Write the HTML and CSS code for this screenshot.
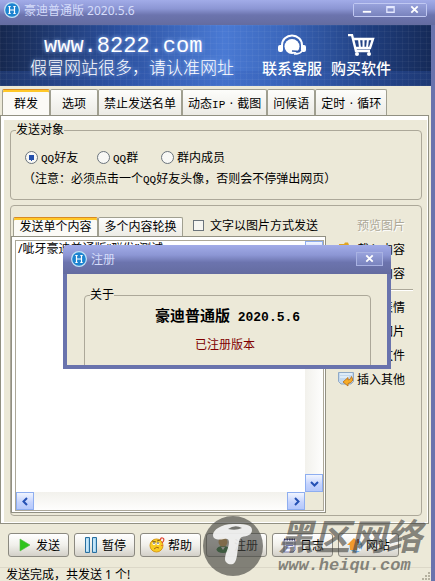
FILE: index.html
```html
<!DOCTYPE html>
<html lang="zh-CN">
<head>
  <meta charset="UTF-8">
  <meta name="viewport" content="width=device-width, initial-scale=1.0">
  <title>豪迪普通版 2020.5.6</title>
  <link rel="stylesheet" href="styles.css">
</head>
<body>
  <div class="window">

    <header class="titlebar">
      <svg class="logo" viewBox="0 0 16 16">
        <circle cx="8" cy="8" r="7.4" fill="#1c84d0" stroke="#c4e2f6" stroke-width="1.2"/>
        <path d="M5.5 4.5v7M10.5 4.5v7M5.5 8h5M4.3 4.5h2.4M9.3 4.5h2.4M4.3 11.5h2.4M9.3 11.5h2.4" stroke="#fff" stroke-width="1.2" fill="none"/>
      </svg>
      <h1>豪迪普通版 2020.5.6</h1>
      <div class="window-buttons">
        <button aria-label="最小化"><svg viewBox="0 0 12 12"><path d="M2 8.500h9" stroke="#fff" stroke-width="2"/></svg></button>
        <button aria-label="最大化"><svg viewBox="0 0 12 12"><path d="M2 3h8v6H2zM2 4h8" stroke="#e4e8ff" stroke-width="1.400" fill="none"/></svg></button>
        <button aria-label="关闭"><svg viewBox="0 0 12 12"><path d="M2.500 2.500l7 7M9.500 2.500l-7 7" stroke="#fff" stroke-width="2"/></svg></button>
      </div>
    </header>

    <div class="client">
      <div class="banner">
        <div class="slogan">
          <p class="site">www.8222.com</p>
          <p class="warning">假冒网站很多，请认准网址</p>
        </div>
        <a class="banner-link" href="#">
          <svg width="28" height="22" viewBox="0 0 28 22">
            <path d="M4 13V11a10 9.500 0 0 1 20 0v2" stroke="#fff" stroke-width="2" fill="none"/>
            <circle cx="14" cy="12.500" r="7.500" fill="#fff"/>
            <rect x="0" y="11" width="5" height="7" rx="2" fill="#fff"/>
            <rect x="23" y="11" width="5" height="7" rx="2" fill="#fff"/>
            <path d="M24 17q-2 3-8 3" stroke="#fff" stroke-width="1.500" fill="none"/>
            <path d="M14 17l8 .5" stroke="#345ba8" stroke-width="1.500"/>
          </svg>
          联系客服
        </a>
        <a class="banner-link" href="#">
          <svg width="28" height="22" viewBox="0 0 28 22">
            <path d="M1 1h4l4 16h14M7 5h19l-3 9H9" stroke="#fff" stroke-width="2.400" fill="none"/>
            <path d="M12 5l1 9M16.500 5v9M21 5l-1 9" stroke="#fff" stroke-width="2"/>
            <circle cx="10" cy="20" r="2" fill="#fff"/>
            <circle cx="22" cy="20" r="2" fill="#fff"/>
          </svg>
          购买软件
        </a>
      </div>

      <nav class="tabs">
        <button class="tab active">群发</button>
        <button class="tab">选项</button>
        <button class="tab">禁止发送名单</button>
        <button class="tab">动态<span class="half">IP</span><span class="dot">·</span>截图</button>
        <button class="tab">问候语</button>
        <button class="tab">定时<span class="dot">·</span>循环</button>
      </nav>

      <main class="panel">
        <fieldset class="group target">
          <legend>发送对象</legend>
          <div class="radios">
            <label><input type="radio" name="target" checked><span><span class="half">QQ</span>好友</span></label>
            <label><input type="radio" name="target"><span><span class="half">QQ</span>群</span></label>
            <label><input type="radio" name="target"><span>群内成员</span></label>
          </div>
          <p class="note">（注意：必须点击一个<span class="half">QQ</span>好友头像，否则会不停弹出网页）</p>
        </fieldset>

        <section class="group content">
          <div class="editor">
            <div class="editor-head">
              <div class="small-tabs">
                <button class="tab active">发送单个内容</button>
                <button class="tab">多个内容轮换</button>
              </div>
              <label class="as-image"><input type="checkbox">文字以图片方式发送</label>
            </div>
            <div class="editor-frame">
              <div class="editor-box">
                <textarea aria-label="发送内容" spellcheck="false">/呲牙豪迪普通版“群发”测试</textarea>
                <div class="scroll-v">
                  <button aria-label="向上"><svg viewBox="0 0 9 9"><path d="M1 6l3.500-3.500L8 6"/></svg></button>
                  <button aria-label="向下"><svg viewBox="0 0 9 9"><path d="M1 3l3.500 3.500L8 3"/></svg></button>
                </div>
                <div class="scroll-h">
                  <button aria-label="向左"><svg viewBox="0 0 9 9"><path d="M6 1L2.500 4.500 6 8"/></svg></button>
                  <button aria-label="向右"><svg viewBox="0 0 9 9"><path d="M3 1l3.500 3.500L3 8"/></svg></button>
                </div>
              </div>
            </div>
          </div>

          <div class="actions">
            <button class="action" disabled><i class="icon"></i>预览图片</button>
            <button class="action"><svg class="icon" viewBox="0 0 16 16"><path d="M1 3h5l1-1.500h3L11 4h4v10H1z" fill="#e0a422"/></svg>载入内容</button>
            <button class="action"><i class="icon"></i>清空内容</button>
            <hr>
            <button class="action"><i class="icon"></i>插入表情</button>
            <button class="action"><i class="icon"></i>插入图片</button>
            <button class="action"><i class="icon"></i>插入文件</button>
            <button class="action">
              <svg class="icon" viewBox="0 0 16 16">
                <path d="M.5 1.500h15v9L13 13H3L.5 10.500z" fill="#c3d8ee" stroke="#8fa9c6"/>
                <path d="M2 3h12M2 6h9" stroke="#e8f2fc" stroke-width="1.500"/>
                <path d="M5 11l5-4.500V9q3 0 3.500-3.500Q17 11 10 12.500V15z" fill="#f7ad28" stroke="#b86b10" stroke-width=".8"/>
              </svg>插入其他</button>
          </div>
        </section>
      </main>

      <div class="toolbar">
        <button class="tool">
          <svg class="icon" viewBox="0 0 16 16"><path d="M3 2l10 6-10 6z" fill="#2fc41c" stroke="#55b848" stroke-width=".6"/></svg>发送
        </button>
        <button class="tool">
          <svg class="icon" viewBox="0 0 16 16"><path d="M2.500.5h4v15h-4zM9.500.5h4v15h-4z" fill="#a5d5f1" stroke="#286f9f"/><path d="M4 2v12M11 2v12" stroke="#e7f7ff"/></svg>暂停
        </button>
        <button class="tool">
          <svg class="icon" viewBox="0 0 16 16">
            <circle cx="7.500" cy="8.500" r="6.500" fill="#f8cc22" stroke="#d99b19"/>
            <path d="M3 4l4 1M8 4l3-1" stroke="#8d6510"/>
            <circle cx="5" cy="6.500" r="1.500" fill="#fff"/><circle cx="9" cy="6.500" r="1.500" fill="#fff"/>
            <circle cx="5" cy="6" r=".7"/><circle cx="9" cy="6" r=".7"/>
            <path d="M5 12q3-3 5-1" stroke="#a86812" fill="none"/>
            <path d="M11.500 3q0-2.500 2-2t1 3l-1.500 2M13 8v1" stroke="#e04430" stroke-width="1.200" fill="none"/>
          </svg>帮助
        </button>
        <button class="tool">
          <svg class="icon" viewBox="0 0 16 16"><ellipse cx="8" cy="12.500" rx="6.500" ry="3.500" fill="#287a38"/><circle cx="8" cy="5" r="4.500" fill="#e2a958"/><path d="M6 10l2 3 2-3z" fill="#fff"/></svg>注册
        </button>
        <button class="tool">
          <svg class="icon" viewBox="0 0 16 16"><path d="M3 2.500h11V13l-2 2H3z" fill="#f2f3ff" stroke="#7979a8"/><path d="M3 2.500h11" stroke="#34345e" stroke-width="2" stroke-dasharray="1.500 1"/><path d="M5 6h7M5 8.500h7M5 11h5" stroke="#777bc0"/></svg>日志
        </button>
        <button class="tool">
          <svg class="icon" viewBox="0 0 16 16"><circle cx="9" cy="9" r="6.500" fill="#65a9df"/><path d="M8 8h6v6H8z" fill="#e3f1fb"/><path d="M0 8l7-7 5 6-2 1v5H3V8z" fill="#f09a2b"/><path d="M10 2h2v4h-2z" fill="#9e3b27"/></svg>网站
        </button>
      </div>

      <footer class="status">
        <span>发送完成，共发送 1 个!</span>
        <svg class="grip" width="10" height="10" viewBox="0 0 10 10"><path d="M8 2h2M5 5h2M8 5h2M2 8h2M5 8h2M8 8h2" stroke="#b5b19f" stroke-width="2"/></svg>
      </footer>
    </div>

    <div class="dialog" role="dialog" aria-label="注册">
      <div class="dialog-title">
        <svg class="logo" viewBox="0 0 16 16">
          <circle cx="8" cy="8" r="7.4" fill="#1c84d0" stroke="#c4e2f6" stroke-width="1.2"/>
          <path d="M5.5 4.5v7M10.5 4.5v7M5.5 8h5M4.3 4.5h2.4M9.3 4.5h2.4M4.3 11.5h2.4M9.3 11.5h2.4" stroke="#fff" stroke-width="1.2" fill="none"/>
        </svg>
        <h2>注册</h2>
        <button class="dialog-close" aria-label="关闭"><svg viewBox="0 0 12 12"><path d="M2.500 2.500l7 7M9.500 2.500l-7 7" stroke="#fff" stroke-width="2"/></svg></button>
      </div>
      <div class="dialog-body">
        <fieldset class="group about">
          <legend>关于</legend>
          <p class="product">豪迪普通版<span class="version"> 2020.5.6</span></p>
          <p class="registered">已注册版本</p>
        </fieldset>
      </div>
    </div>

    <div class="watermark">
      <svg width="60" height="60" viewBox="0 0 60 60">
        <circle cx="30" cy="30" r="30" fill="#484844" fill-opacity=".65"/>
        <path d="M10 19C10 14 18 8 30 8c10 0 19 0 19 6 0 5-5 6-10 7-3 1-3 6-4 11-1 6-1 14-5 16-4 1-8-1-8-5 0-6 4-11 4-17 0-3-2-4-5-3-5 1-11 1-11-4z" fill="#fff" fill-opacity=".85"/>
        <path d="M25 13q7-5 14-1-6 3-14 1z" fill="#74746f"/>
      </svg>
      <div class="watermark-text">
        <span class="watermark-name">黑区网络</span>
        <span class="watermark-url">www.heiqu.com</span>
      </div>
    </div>

  </div>
</body>
</html>
```
FILE: styles.css
```css
* {
  box-sizing: border-box;
}

body {
  margin: 0;
  font-family: "Noto Sans", "Noto Sans CJK SC", sans-serif;
  font-size: 12px;
  color: #000;
}

h1, h2, p {
  margin: 0;
  font-size: 12px;
  font-weight: normal;
}

button, textarea {
  font-family: inherit;
  font-size: 12px;
  color: inherit;
  padding: 0;
}

/* latin letters that take half of a chinese one */
.half {
  font-family: "Liberation Mono", monospace;
  font-size: 11px;
}

.dot {
  display: inline-block;
  width: 12px;
  text-align: center;
}

.icon {
  width: 16px;
  height: 16px;
  flex: none;
}

.window {
  position: relative;
  display: flex;
  flex-direction: column;
  height: 100vh;
  overflow: hidden;
  background-color: #ece9d8;
}

/* title bar */
.titlebar, .dialog-title {
  display: flex;
  align-items: center;
  color: #d5dcfa;
  background: linear-gradient(#a2ace8, #8c96d4 35%, #6c74ae 60%, #646ca0);
}

.titlebar {
  height: 25px;
  padding: 0 8px 6px 4px;
  flex: none;
}

.logo {
  width: 16px;
  height: 16px;
  margin-right: 4px;
}

.window-buttons {
  display: flex;
  margin-left: auto;
  border: 1px solid #c0c8f2;
  border-radius: 2px;
}

.window-buttons button, .dialog-close {
  display: flex;
  align-items: center;
  justify-content: center;
  width: 24px;
  height: 12px;
  border: 0;
  background: linear-gradient(#98a2dc, #7983bd);
}

.window-buttons svg, .dialog-close svg {
  width: 11px;
  height: 11px;
}

.client {
  flex: 1;
  min-height: 0;
  display: flex;
  flex-direction: column;
  border-right: 4px solid #6973ad;
}

/* banner */
.banner {
  display: flex;
  height: 61px;
  flex: none;
  color: #fff;
  background:
    repeating-linear-gradient(90deg, rgba(255, 255, 255, 0.04) 0 1px, transparent 1px 6px),
    repeating-linear-gradient(rgba(255, 255, 255, 0.04) 0 1px, transparent 1px 6px),
    linear-gradient(transparent 75%, rgba(50, 90, 180, 0.3) 75%),
    linear-gradient(90deg, #16284f, #2c51a0 28%, #4a7ad4 52%, #3c68bd 65%, #203f80 85%, #152a58);
}

.slogan {
  width: 232px;
  padding: 10px 0 0 30px;
  text-shadow: 0 0 4px #9fc0ff;
  white-space: nowrap;
}

.site {
  padding-left: 14px;
  font-family: "Liberation Mono", monospace;
  font-size: 22px;
  line-height: 24px;
}

.warning {
  font-size: 17px;
  font-weight: 300;
  line-height: 18px;
}

.banner-link {
  display: flex;
  flex-direction: column;
  align-items: center;
  width: 60px;
  margin: 9px 0 0 30px;
  color: #fff;
  font-size: 15px;
  font-weight: 500;
  line-height: 20px;
  text-decoration: none;
  white-space: nowrap;
}

.banner-link + .banner-link {
  margin-left: 9px;
}

.banner-link svg {
  margin-bottom: 2px;
}

/* tabs */
.tabs {
  display: flex;
  padding: 3px 0 0 2px;
}

.tab {
  min-width: 48px;
  height: 26px;
  padding: 0 5px;
  border: 1px solid #a09f90;
  border-bottom: 0;
  border-radius: 2px 2px 0 0;
  background: linear-gradient(#fdfdfb, #ecebe5);
  white-space: nowrap;
}

.tab.active {
  border-top: 1px solid #d98a24;
  box-shadow: inset 0 2px 0 #ffc828;
  background: #fbfaf6;
}

/* panel */
.panel {
  flex: 1;
  min-height: 0;
  display: flex;
  flex-direction: column;
  gap: 5px;
  margin-right: 2px;
  padding: 7px 6px 7px 9px;
  border: 1px solid #919082;
  box-shadow: inset 3px 4px 0 #fff, inset -1px -1px 0 #fff;
}

.group {
  min-width: 0;
  margin: 0;
  border: 1px solid #aca899;
  border-radius: 4px;
}

.group legend {
  padding: 0;
  line-height: 14px;
}

.target {
  padding: 9px 5px 8px;
}

.radios {
  display: grid;
  grid-template-columns: 72px 64px auto;
  align-items: center;
  height: 22px;
  padding-left: 9px;
}

.radios label, .as-image {
  display: flex;
  align-items: center;
  white-space: nowrap;
}

.radios input {
  appearance: none;
  width: 13px;
  height: 13px;
  margin: 0 3px 0 0;
  border: 1px solid #6b747c;
  border-radius: 50%;
  background: #f8f8f5;
}

.radios input:checked {
  background: radial-gradient(#2450ac 0 3px, #f8f8f5 3px);
}

.note {
  padding-left: 7px;
  line-height: 22px;
  white-space: nowrap;
}

/* editor and its actions */
.content {
  flex: 1;
  min-height: 0;
  display: flex;
}

.editor {
  flex: 1;
  display: flex;
  flex-direction: column;
  padding: 8px 0 2px;
}

.editor-head {
  display: flex;
  align-items: flex-end;
  padding-left: 2px;
}

.small-tabs {
  display: flex;
  padding-top: 3px;
}

.small-tabs .tab {
  width: 85px;
  height: 19px;
  line-height: 18px;
}

.as-image {
  margin-left: 10px;
  height: 22px;
}

.as-image input {
  appearance: none;
  width: 11px;
  height: 11px;
  margin: 0 6px 0 0;
  border: 1px solid #6b747c;
  background: #f6f6f2;
}

.editor-frame {
  flex: 1;
  display: flex;
  padding: 3px 1px 1px 3px;
  border: 1px solid #919082;
  background: #fff;
}

.editor-box {
  flex: 1;
  display: grid;
  grid-template-columns: 1fr 18px;
  grid-template-rows: 1fr 18px;
  border: 1px solid #aca899;
  background: #ece9d8;
}

.editor-box textarea {
  min-width: 0;
  padding: 0 2px;
  border: 0;
  outline: 0;
  resize: none;
  overflow: hidden;
  line-height: 16px;
  background: #fff;
}

.scroll-v, .scroll-h {
  display: flex;
  justify-content: space-between;
  background: linear-gradient(90deg, #f2f1ec, #fefefd);
}

.scroll-v {
  flex-direction: column;
}

.scroll-h {
  background: linear-gradient(#f2f1ec, #fefefd);
}

.scroll-v button, .scroll-h button {
  display: flex;
  align-items: center;
  justify-content: center;
  width: 18px;
  height: 18px;
  border: 1px solid #8eaef0;
  background: linear-gradient(#f1f5ff, #c3d2fd 60%, #b5c8fb);
}

.scroll-v svg, .scroll-h svg {
  width: 9px;
  height: 9px;
  fill: none;
  stroke: #2450b4;
  stroke-width: 2;
}

.actions {
  width: 95px;
  padding: 7px 8px 0 12px;
}

.action {
  display: flex;
  align-items: center;
  gap: 3px;
  width: 100%;
  height: 24px;
  border: 0;
  background: none;
  white-space: nowrap;
}

.action:disabled {
  color: #aca899;
  text-shadow: 1px 1px 0 #fff;
}

.actions hr {
  margin: 4px 0;
  border: 0;
  border-top: 1px solid #aca899;
  border-bottom: 1px solid #fff;
}

/* bottom buttons */
.toolbar {
  display: flex;
  gap: 5px;
  padding: 9px 8px 10px;
}

.tool {
  display: flex;
  align-items: center;
  justify-content: center;
  gap: 3px;
  width: 61px;
  height: 24px;
  border: 1px solid #8b8980;
  border-radius: 3px;
  background: linear-gradient(#fff, #f1f0eb 50%, #d3d0c8);
  white-space: nowrap;
}

.status {
  display: flex;
  justify-content: space-between;
  height: 14px;
  padding: 0 1px 0 6px;
  border-top: 1px solid #dcd8c8;
  line-height: 14px;
  flex: none;
}

.grip {
  margin-top: 3px;
}

/* dialog */
.dialog {
  position: absolute;
  top: 245px;
  left: 63px;
  right: 44px;
  border: 4px solid #6973ad;
  border-top: 0;
  border-radius: 5px 5px 0 0;
  background: #6973ad;
}

.dialog-title {
  height: 29px;
  margin: 0 -4px;
  padding: 0 8px 2px;
  border-radius: 5px 5px 0 0;
}

.dialog-close {
  width: 27px;
  height: 14px;
  margin-left: auto;
  border: 1px solid #a9b2e2;
}

.dialog-body {
  height: 91px;
  padding: 14px 16px 0 17px;
  overflow: hidden;
  background: #ece9d8;
}

.about {
  height: 100px;
  padding: 2px 5px 0;
}

.product, .registered {
  text-align: center;
}

.product {
  font-size: 15px;
  font-weight: bold;
  line-height: 22px;
}

.version {
  font-family: "Liberation Mono", monospace;
  font-size: 13px;
}

.registered {
  padding: 7px 5px 0 0;
  line-height: 18px;
  color: #800000;
}

/* watermark over the bottom buttons */
.watermark {
  position: absolute;
  right: 13px;
  bottom: 5px;
  display: flex;
  gap: 15px;
  pointer-events: none;
}

.watermark-text {
  display: flex;
  flex-direction: column;
  color: rgba(72, 72, 68, 0.65);
  font-weight: bold;
  font-style: italic;
  white-space: nowrap;
}

.watermark-name {
  font-size: 36px;
  line-height: 42px;
}

.watermark-url {
  font-family: "Liberation Mono", monospace;
  font-size: 17px;
  line-height: 16px;
}
```
